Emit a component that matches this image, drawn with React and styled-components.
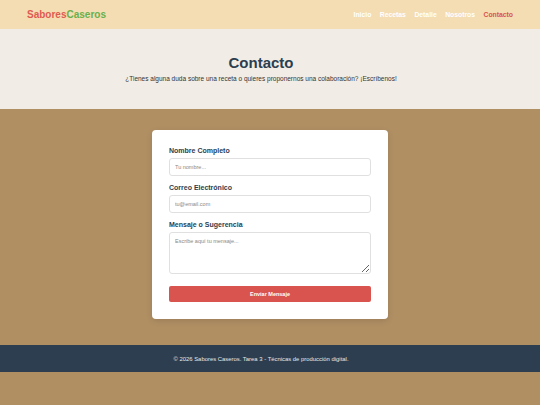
import styled, { createGlobalStyle } from "styled-components";

const GlobalStyle = createGlobalStyle`
  * { box-sizing: border-box; }
  body {
    margin: 0;
    background: #b08f63;
    font-family: "Liberation Sans", Arial, sans-serif;
  }
`;

const Header = styled.header`
  height: 29px;
  background: #f4ddb3;
  display: flex;
  align-items: center;
  justify-content: space-between;
  padding: 0 27px;
`;

const Logo = styled.div`
  font-size: 10px;
  font-weight: 700;
  color: #e05a50;
  span { color: #6ab04c; }
`;

const Nav = styled.nav`
  display: flex;
  gap: 8.5px;
`;

const NavLink = styled.a`
  font-size: 6.8px;
  font-weight: 700;
  color: ${(p) => (p.$active ? "#d9534f" : "#ffffff")};
  text-decoration: none;
`;

const Hero = styled.section`
  height: 80px;
  background: #f1ede6;
  display: flex;
  flex-direction: column;
  align-items: center;
  justify-content: center;
  padding: 0 18px 2px 0;
`;

const Title = styled.h1`
  margin: 0;
  font-size: 15px;
  font-weight: 700;
  color: #2c3e50;
  line-height: 18px;
`;

const Subtitle = styled.p`
  margin: 3px 0 0;
  font-size: 6.5px;
  color: #333;
`;

const Main = styled.main`
  background: #b08f63;
  padding: 21px 0 26px;
  display: flex;
  justify-content: center;
`;

const Card = styled.form`
  width: 236px;
  background: #fff;
  border-radius: 4px;
  box-shadow: 0 2px 6px rgba(0, 0, 0, 0.12);
  padding: 17px 17px 17px;
  display: flex;
  flex-direction: column;
`;

const Group = styled.div`
  display: flex;
  flex-direction: column;
  margin-bottom: 8px;
`;

const Label = styled.label`
  font-size: 7px;
  font-weight: 700;
  color: #2c3e50;
  line-height: 8px;
  margin-bottom: 3px;
`;

const Input = styled.input`
  height: 18px;
  border: 1px solid #e0e0e0;
  border-radius: 3px;
  padding: 0 5px;
  font-family: inherit;
  font-size: 5.5px;
  color: #333;
  &::placeholder { color: #888; }
`;

const TextArea = styled.textarea`
  height: 42px;
  border: 1px solid #e0e0e0;
  border-radius: 3px;
  padding: 5px;
  font-family: inherit;
  font-size: 5.5px;
  resize: vertical;
  &::placeholder { color: #888; }
`;

const Button = styled.button`
  margin-top: 4px;
  height: 16px;
  border: none;
  border-radius: 2px;
  background: #d9534f;
  color: #fff;
  font-family: inherit;
  font-size: 5.5px;
  font-weight: 700;
  cursor: pointer;
`;

const Footer = styled.footer`
  height: 27px;
  background: #2c3e50;
  display: flex;
  align-items: center;
  justify-content: center;
  padding-right: 18px;
  font-size: 5.9px;
  color: #e8e8e8;
`;

export default function App() {
  return (
    <>
      <GlobalStyle />
      <Header>
        <Logo>
          Sabores<span>Caseros</span>
        </Logo>
        <Nav>
          <NavLink href="#">Inicio</NavLink>
          <NavLink href="#">Recetas</NavLink>
          <NavLink href="#">Detalle</NavLink>
          <NavLink href="#">Nosotros</NavLink>
          <NavLink href="#" $active>Contacto</NavLink>
        </Nav>
      </Header>
      <Hero>
        <Title>Contacto</Title>
        <Subtitle>
          ¿Tienes alguna duda sobre una receta o quieres proponernos una colaboración? ¡Escríbenos!
        </Subtitle>
      </Hero>
      <Main>
        <Card onSubmit={(e) => e.preventDefault()}>
          <Group>
            <Label>Nombre Completo</Label>
            <Input placeholder="Tu nombre..." />
          </Group>
          <Group>
            <Label>Correo Electrónico</Label>
            <Input type="email" placeholder="tu@email.com" />
          </Group>
          <Group>
            <Label>Mensaje o Sugerencia</Label>
            <TextArea placeholder="Escribe aquí tu mensaje..." />
          </Group>
          <Button type="submit">Enviar Mensaje</Button>
        </Card>
      </Main>
      <Footer>© 2026 Sabores Caseros. Tarea 3 - Técnicas de producción digital.</Footer>
    </>
  );
}
